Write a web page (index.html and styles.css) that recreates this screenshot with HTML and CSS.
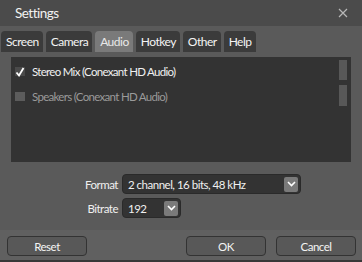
FILE: index.html
```html
<!DOCTYPE html>
<html lang="en">
<head>
    <meta charset="UTF-8">
    <title>Settings</title>
    <link rel="stylesheet" href="styles.css">
</head>
<body>
    <div class="window">
        <div class="titlebar">
            <span class="title">Settings</span>
            <svg class="close" width="10" height="10" viewBox="0 0 10 10">
                <path d="M1 1 L9 9 M9 1 L1 9" stroke="#b8b8b8" stroke-width="1.2"/>
            </svg>
        </div>
        <div class="content">
            <div class="tabs">
                <div class="tab">Screen</div>
                <div class="tab">Camera</div>
                <div class="tab active">Audio</div>
                <div class="tab">Hotkey</div>
                <div class="tab">Other</div>
                <div class="tab">Help</div>
            </div>
            <div class="devices">
                <div class="list">
                    <div class="item">
                        <span class="check checked">
                            <svg width="10" height="10" viewBox="0 0 10 10">
                                <path d="M1.5 5.5 L4 8.5 L8.5 1" stroke="#fff" stroke-width="1.8" fill="none"/>
                            </svg>
                        </span>
                        <span>Stereo Mix (Conexant HD Audio)</span>
                    </div>
                    <div class="item disabled">
                        <span class="check"></span>
                        <span>Speakers (Conexant HD Audio)</span>
                    </div>
                </div>
                <div class="scroll">
                    <div class="thumb first"></div>
                    <div class="thumb"></div>
                </div>
            </div>
            <div class="form">
                <div class="row">
                    <label>Format</label>
                    <div class="select wide">
                        <span>2 channel, 16 bits, 48 kHz</span>
                        <span class="arrow">
                            <svg width="9" height="6" viewBox="0 0 9 6"><path d="M1 1 L4.5 4.5 L8 1" stroke="#fff" stroke-width="1.6" fill="none"/></svg>
                        </span>
                    </div>
                </div>
                <div class="row">
                    <label>Bitrate</label>
                    <div class="select narrow">
                        <span>192</span>
                        <span class="arrow">
                            <svg width="9" height="6" viewBox="0 0 9 6"><path d="M1 1 L4.5 4.5 L8 1" stroke="#fff" stroke-width="1.6" fill="none"/></svg>
                        </span>
                    </div>
                </div>
            </div>
        </div>
        <div class="footer">
            <button class="btn">Reset</button>
            <div class="spacer"></div>
            <button class="btn">OK</button>
            <button class="btn">Cancel</button>
        </div>
    </div>
</body>
</html>
```

FILE: styles.css
```css
body {
    margin: 0;
    background-color: #5a5a5a;
    font-family: Lato, "Noto Sans", sans-serif;
    font-size: 12px;
    letter-spacing: -0.5px;
    color: #f0f0f0;
}

.window {
    width: 362px;
    height: 262px;
    display: flex;
    flex-direction: column;
    box-sizing: border-box;
    border-bottom: 2px solid #383838;
}

.titlebar {
    height: 26px;
    display: flex;
    align-items: center;
    justify-content: space-between;
    padding: 0 14px 0 15px;
    background-color: #4b4b4b;
    flex-shrink: 0;
}

.title {
    font-size: 13.5px;
    color: #f2f2f2;
}

.content {
    flex: 1;
    background-color: #5a5a5a;
}

.tabs {
    display: flex;
    gap: 3px;
    padding: 5px 0 0 1px;
}

.tab {
    height: 21px;
    line-height: 22px;
    padding: 0 4px 0 5px;
    background-color: #3b3b3b;
    border-radius: 4px 4px 0 0;
    font-size: 12px;
    color: #f4f4f4;
}

.tab.active {
    background-color: #7a7a7a;
    color: #e8e8e8;
}

.devices {
    display: flex;
    margin: 5px 11px 0 11px;
    height: 105px;
    background-color: #333;
}

.list {
    flex: 1;
    padding: 2px 0 0 4px;
}

.item {
    display: flex;
    align-items: center;
    gap: 7px;
    height: 25px;
    font-size: 11.5px;
    letter-spacing: -0.7px;
}

.item.disabled {
    color: #9a9a9a;
}

.check {
    width: 10px;
    height: 9px;
    background-color: #5c5c5c;
    display: flex;
    align-items: center;
    justify-content: center;
}

.check.checked {
    background-color: #4a4a4a;
}

.scroll {
    width: 8px;
    padding: 3px 4px 0 0;
}

.thumb {
    height: 21px;
    background-color: #585858;
}

.thumb.first {
    height: 20px;
    margin-bottom: 5px;
}

.form {
    display: flex;
    flex-direction: column;
    gap: 4px;
    margin-top: 12px;
}

.row {
    display: flex;
    align-items: center;
}

.row label {
    width: 118px;
    text-align: right;
    padding-right: 4px;
    font-size: 11.5px;
}

.select {
    height: 20px;
    box-sizing: border-box;
    display: flex;
    align-items: center;
    justify-content: space-between;
    padding: 0 2px 0 5px;
    background-color: #333;
    border: 1px solid #2a2a2a;
    border-radius: 4px;
    font-size: 11.5px;
}

.select.wide {
    width: 179px;
}

.select.narrow {
    width: 59px;
}

.arrow {
    width: 14px;
    height: 15px;
    background-color: #7a7a7a;
    border-radius: 2px;
    display: flex;
    align-items: center;
    justify-content: center;
}

.footer {
    height: 28px;
    display: flex;
    align-items: center;
    gap: 10px;
    padding: 2px 6px 0 7px;
    background-color: #606060;
}

.spacer {
    flex: 1;
}

.btn {
    width: 80px;
    height: 20px;
    background-color: #585858;
    border: 1px solid #333;
    border-radius: 4px;
    color: #f4f4f4;
    font-family: Lato, "Noto Sans", sans-serif;
    font-size: 11.5px;
    letter-spacing: -0.5px;
    padding: 0;
}
```
